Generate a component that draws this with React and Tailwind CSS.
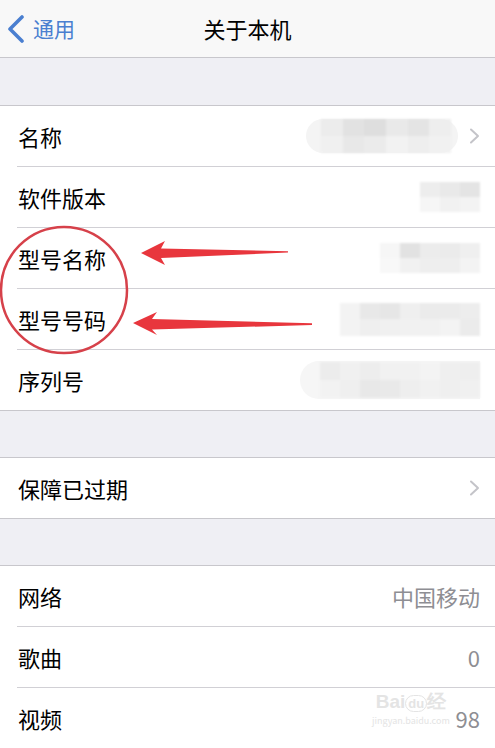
import { Children } from "react";

const font = { fontFamily: '"Noto Sans CJK SC", "Noto Sans", sans-serif' };

const Chevron = () => (
  <svg width="11" height="16" viewBox="0 0 11 16" className="ml-[11px]">
    <polyline
      points="2,1.5 9,8 2,14.5"
      fill="none"
      stroke="#c4c4c9"
      strokeWidth="2"
      strokeLinecap="round"
      strokeLinejoin="round"
    />
  </svg>
);

const Mosaic = ({ cols, cells, className }) => (
  <div className={`grid ${cols} blur-[1px] ${className}`}>
    {cells.map((c, i) => (
      <div key={i} className={c} />
    ))}
  </div>
);

const Row = ({ label, children, chevron }) => (
  <div className="flex h-[60px] items-center pl-[18px] pr-[15px]">
    <span className="text-[22px] leading-none text-black">{label}</span>
    <div className="ml-auto flex items-center">
      {children}
      {chevron && <Chevron />}
    </div>
  </div>
);

const Value = ({ children }) => (
  <span className="text-[22px] leading-none text-[#8e8e93]">{children}</span>
);

const Group = ({ children }) => (
  <div className="border-y border-[#c8c7cc] bg-white">
    {Children.toArray(children).map((child, i) => (
      <div key={i}>
        {i > 0 && <div className="ml-[17px] h-px bg-[#d1d0d5]" />}
        {child}
      </div>
    ))}
  </div>
);

const Gap = ({ className = "h-[46px]" }) => (
  <div className={`bg-[#efeff4] ${className}`} />
);

export default function App() {
  return (
    <div
      className="relative h-[748px] w-[495px] overflow-hidden bg-[#efeff4]"
      style={font}
    >
      <div className="relative flex h-[58px] items-center justify-center border-b border-[#c8c7cc] bg-[#f8f8f8]">
        <div className="absolute left-[7px] top-0 flex h-full items-center text-[#4a7fd0]">
          <svg width="18" height="28" viewBox="0 0 18 28">
            <polyline
              points="15,2 3,14 15,26"
              fill="none"
              stroke="#4a7fd0"
              strokeWidth="3.6"
              strokeLinecap="round"
              strokeLinejoin="round"
            />
          </svg>
          <span className="ml-[8px] text-[21px]">通用</span>
        </div>
        <span className="text-[22px] text-black">关于本机</span>
      </div>

      <Gap className="h-[47px]" />
      <Group>
        <Row label="名称" chevron>
          <div className="flex h-[34px] w-[152px] items-center rounded-full bg-[#f4f4f4] pl-[15px]">
            <Mosaic
              cols="grid-cols-6"
              className="h-[34px] w-[130px]"
              cells={[
                "bg-[#ececec]",
                "bg-[#e2e2e2]",
                "bg-[#dedede]",
                "bg-[#e9e9e9]",
                "bg-[#e4e4e4]",
                "bg-[#eeeeee]",
                "bg-[#f0f0f0]",
                "bg-[#e8e8e8]",
                "bg-[#ebebeb]",
                "bg-[#f2f2f2]",
                "bg-[#eeeeee]",
                "bg-[#f1f1f1]",
              ]}
            />
          </div>
        </Row>
        <Row label="软件版本">
          <Mosaic
            cols="grid-cols-3"
            className="h-[30px] w-[60px]"
            cells={[
              "bg-[#ededed]",
              "bg-[#e9e9e9]",
              "bg-[#e4e4e4]",
              "bg-[#f6f6f6]",
              "bg-[#f1f1f1]",
              "bg-[#f3f3f3]",
            ]}
          />
        </Row>
        <Row label="型号名称">
          <Mosaic
            cols="grid-cols-5"
            className="h-[30px] w-[100px]"
            cells={[
              "bg-[#f6f6f6]",
              "bg-[#e2e2e2]",
              "bg-[#ececec]",
              "bg-[#ebebeb]",
              "bg-[#efefef]",
              "bg-[#f8f8f8]",
              "bg-[#f1f1f1]",
              "bg-[#eeeeee]",
              "bg-[#eeeeee]",
              "bg-[#f3f3f3]",
            ]}
          />
        </Row>
        <Row label="型号号码">
          <Mosaic
            cols="grid-cols-7"
            className="h-[33px] w-[140px]"
            cells={[
              "bg-[#f3f3f3]",
              "bg-[#e8e8e8]",
              "bg-[#e6e6e6]",
              "bg-[#efefef]",
              "bg-[#ebebeb]",
              "bg-[#ebebeb]",
              "bg-[#ededed]",
              "bg-[#f3f3f3]",
              "bg-[#efefef]",
              "bg-[#f0f0f0]",
              "bg-[#f1f1f1]",
              "bg-[#f1f1f1]",
              "bg-[#f3f3f3]",
              "bg-[#ebebeb]",
            ]}
          />
        </Row>
        <Row label="序列号">
          <div className="flex h-[38px] items-center rounded-l-full bg-[#f6f6f6] pl-[20px]">
            <Mosaic
              cols="grid-cols-8"
              className="h-[36px] w-[160px]"
              cells={[
                "bg-[#ececec]",
                "bg-[#f0f0f0]",
                "bg-[#ededed]",
                "bg-[#f1f1f1]",
                "bg-[#f1f1f1]",
                "bg-[#f3f3f3]",
                "bg-[#efefef]",
                "bg-[#eeeeee]",
                "bg-[#f2f2f2]",
                "bg-[#efefef]",
                "bg-[#e8e8e8]",
                "bg-[#e9e9e9]",
                "bg-[#eeeeee]",
                "bg-[#f1f1f1]",
                "bg-[#efefef]",
                "bg-[#f0f0f0]",
              ]}
            />
          </div>
        </Row>
      </Group>

      <Gap />
      <Group>
        <Row label="保障已过期" chevron />
      </Group>

      <Gap />
      <Group>
        <Row label="网络">
          <Value>中国移动</Value>
        </Row>
        <Row label="歌曲">
          <Value>0</Value>
        </Row>
        <Row label="视频">
          <Value>98</Value>
        </Row>
      </Group>

      {/* annotation: circle and arrows */}
      <svg
        className="pointer-events-none absolute left-0 top-0"
        width="495"
        height="748"
        viewBox="0 0 495 748"
      >
        <ellipse
          cx="64"
          cy="290"
          rx="63"
          ry="63"
          fill="none"
          stroke="#d6414a"
          strokeWidth="2.5"
        />
        <polygon
          points="141,253 165,241 161,248.5 288,251.2 288,252.6 161,258 165,265"
          fill="#e8363d"
        />
        <polygon
          points="133,323 157,312 152,319 312,323.3 312,325 152,329.5 157,335"
          fill="#e8363d"
        />
      </svg>

      {/* watermark */}
      <div className="pointer-events-none absolute left-[372px] top-[692px] flex flex-col items-center leading-none text-[#e4e4e4]">
        <span
          className="text-[19px] font-bold"
          style={{ fontFamily: '"Liberation Sans", sans-serif' }}
        >
          Bai<span className="rounded-full border border-[#e4e4e4] px-[2px] text-[13px]">du</span>经
        </span>
        <span className="mt-[5px] text-[9px]">jingyan.baidu.com</span>
      </div>
    </div>
  );
}
